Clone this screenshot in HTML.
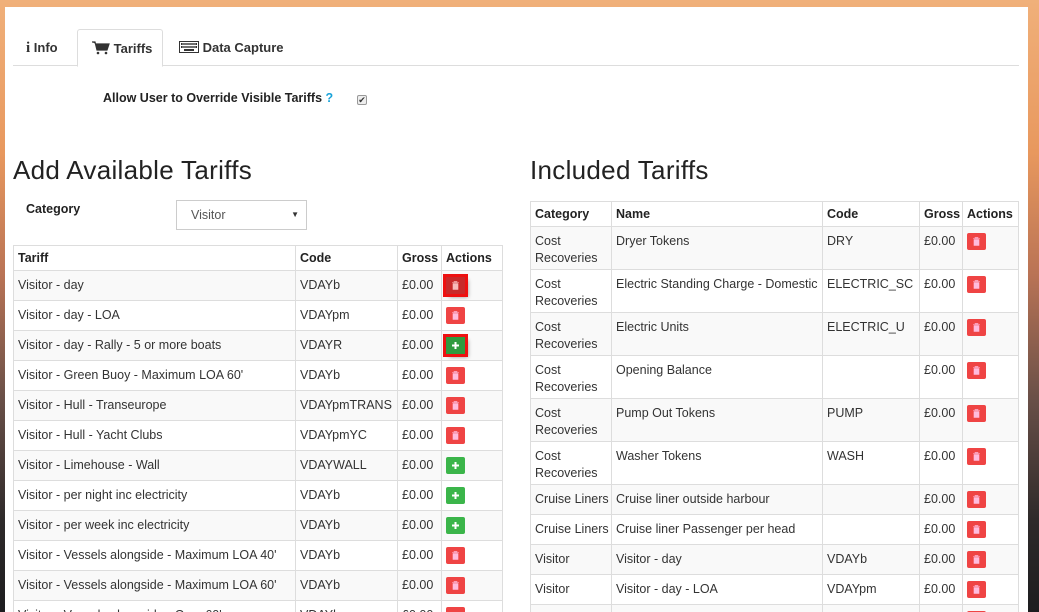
<!DOCTYPE html>
<html><head><meta charset="utf-8"><style>
*{box-sizing:border-box;margin:0;padding:0}
html,body{width:1039px;height:612px;overflow:hidden}
body{position:relative;font-family:"Liberation Sans",sans-serif;color:#333;
background:linear-gradient(180deg,#f0b07a 0%,#e8985e 25%,#b97355 45%,#6a5048 65%,#2e2a2a 85%,#1d1d1f 100%);}
.panel{position:absolute;left:5px;top:7px;width:1023px;height:605px;background:#fff;}
.tabs{position:absolute;left:13px;top:29px;width:1006px;height:37px;border-bottom:1px solid #ddd}
.tab{position:absolute;top:0;height:37px;font-weight:bold;font-size:13px;color:#333;line-height:37px}
.tab.act{border:1px solid #ddd;border-bottom:1px solid #fff;background:#fff;height:38px;border-radius:3px 3px 0 0}
h2{position:absolute;font-weight:normal;font-size:26px;color:#222;letter-spacing:0.3px}
table{position:absolute;border-collapse:collapse;table-layout:fixed;font-size:12.5px}
td,th{border:1px solid #ddd;padding:0 4px;vertical-align:top;text-align:left;overflow:hidden;white-space:nowrap}
th{font-weight:bold;color:#222;height:25px;vertical-align:middle}
tr.s td{background:#f9f9f9}
.l td{height:30px;line-height:28px}
.r td{line-height:17px;padding-top:6px}
.r tr.d td{height:43px}
.r tr.o td{height:30px}
.b{display:inline-block;width:19px;height:17px;vertical-align:middle;position:relative;border-radius:2px}
.b svg{position:absolute;left:5px;top:4px}
.rd{background:#ef4444}
.gr{background:#3bb54a}
.hl{box-shadow:0 0 0 3px #e11,3px 3px 4px rgba(0,0,0,.4);border-radius:0}
</style></head><body>
<div class="panel"></div>
<div class="tabs">
 <div class="tab" style="left:13px"><span style="font-family:'Liberation Serif',serif;font-size:15px">i</span> Info</div>
 <div class="tab act" style="left:64px;width:86px;padding-left:14px"><svg width="18" height="14" viewBox="0 0 18 14" style="vertical-align:-2px"><path d="M0 1h3l2 8h10l2-6H4" fill="#333" stroke="#333" stroke-width="1.2"/><circle cx="6" cy="12" r="1.3" fill="#333"/><circle cx="14" cy="12" r="1.3" fill="#333"/></svg> Tariffs</div>
 <div class="tab" style="left:166px"><svg width="20" height="12" viewBox="0 0 20 12" style="vertical-align:-1px"><rect x="0.5" y="0.5" width="19" height="11" fill="none" stroke="#333"/><path d="M2 2h16v2H2zM2 5h16v2H2zM5 8h10v2H5z" fill="#333"/><path d="M4 2v5M6 2v5M8 2v5M10 2v5M12 2v5M14 2v5M16 2v5" stroke="#fff" stroke-width=".6"/></svg> Data Capture</div>
</div>
<div style="position:absolute;left:103px;top:91px;font-weight:bold;font-size:12.5px;color:#222">Allow User to Override Visible Tariffs <span style="color:#1aa3d9">?</span></div>
<div style="position:absolute;left:357px;top:95px;width:10px;height:10px;border:1px solid #999;border-radius:2px;background:#eee;font-size:9px;line-height:8px;text-align:center">&#10004;</div>

<h2 style="left:13px;top:155px">Add Available Tariffs</h2>
<h2 style="left:530px;top:155px">Included Tariffs</h2>
<div style="position:absolute;left:26px;top:202px;font-weight:bold;font-size:12.5px;color:#222">Category</div>
<div style="position:absolute;left:176px;top:200px;width:131px;height:30px;border:1px solid #ccc;font-size:12.5px;color:#555;line-height:28px;padding-left:14px">Visitor<span style="position:absolute;right:7px;font-size:8px;color:#333">&#9660;</span></div>

<table class="l" style="left:13px;top:245px;width:489px">
<colgroup><col style="width:282px"><col style="width:102px"><col style="width:44px"><col style="width:61px"></colgroup>
<tr><th>Tariff</th><th>Code</th><th>Gross</th><th>Actions</th></tr>
<tr class="s"><td>Visitor - day</td><td>VDAYb</td><td>£0.00</td><td><span class="b rd hl" style="background:#c82a2a"><svg width="9" height="9"><path d="M1 1.5h7M3 1.5V.5h3v1M2 2.5h5v6H2z" fill="#f7bcbc" stroke="#f7bcbc" stroke-width=".6"/></svg></span></td></tr>
<tr><td>Visitor - day - LOA</td><td>VDAYpm</td><td>£0.00</td><td><span class="b rd"><svg width="9" height="9"><path d="M1 1.5h7M3 1.5V.5h3v1M2 2.5h5v6H2z" fill="#fbd" stroke="#fbd" stroke-width=".6"/></svg></span></td></tr>
<tr class="s"><td>Visitor - day - Rally - 5 or more boats</td><td>VDAYR</td><td>£0.00</td><td><span class="b gr hl" style="background:#2f9a3e"><svg width="9" height="9"><path d="M4.5 1v7M1 4.5h7" stroke="#fff" stroke-width="2"/></svg></span></td></tr>
<tr><td>Visitor - Green Buoy - Maximum LOA 60'</td><td>VDAYb</td><td>£0.00</td><td><span class="b rd"><svg width="9" height="9"><path d="M1 1.5h7M3 1.5V.5h3v1M2 2.5h5v6H2z" fill="#fbd" stroke="#fbd" stroke-width=".6"/></svg></span></td></tr>
<tr class="s"><td>Visitor - Hull - Transeurope</td><td>VDAYpmTRANS</td><td>£0.00</td><td><span class="b rd"><svg width="9" height="9"><path d="M1 1.5h7M3 1.5V.5h3v1M2 2.5h5v6H2z" fill="#fbd" stroke="#fbd" stroke-width=".6"/></svg></span></td></tr>
<tr><td>Visitor - Hull - Yacht Clubs</td><td>VDAYpmYC</td><td>£0.00</td><td><span class="b rd"><svg width="9" height="9"><path d="M1 1.5h7M3 1.5V.5h3v1M2 2.5h5v6H2z" fill="#fbd" stroke="#fbd" stroke-width=".6"/></svg></span></td></tr>
<tr class="s"><td>Visitor - Limehouse - Wall</td><td>VDAYWALL</td><td>£0.00</td><td><span class="b gr"><svg width="9" height="9"><path d="M4.5 1v7M1 4.5h7" stroke="#fff" stroke-width="2"/></svg></span></td></tr>
<tr><td>Visitor - per night inc electricity</td><td>VDAYb</td><td>£0.00</td><td><span class="b gr"><svg width="9" height="9"><path d="M4.5 1v7M1 4.5h7" stroke="#fff" stroke-width="2"/></svg></span></td></tr>
<tr class="s"><td>Visitor - per week inc electricity</td><td>VDAYb</td><td>£0.00</td><td><span class="b gr"><svg width="9" height="9"><path d="M4.5 1v7M1 4.5h7" stroke="#fff" stroke-width="2"/></svg></span></td></tr>
<tr><td>Visitor - Vessels alongside - Maximum LOA 40'</td><td>VDAYb</td><td>£0.00</td><td><span class="b rd"><svg width="9" height="9"><path d="M1 1.5h7M3 1.5V.5h3v1M2 2.5h5v6H2z" fill="#fbd" stroke="#fbd" stroke-width=".6"/></svg></span></td></tr>
<tr class="s"><td>Visitor - Vessels alongside - Maximum LOA 60'</td><td>VDAYb</td><td>£0.00</td><td><span class="b rd"><svg width="9" height="9"><path d="M1 1.5h7M3 1.5V.5h3v1M2 2.5h5v6H2z" fill="#fbd" stroke="#fbd" stroke-width=".6"/></svg></span></td></tr>
<tr><td>Visitor - Vessels alongside - Over 60'</td><td>VDAYb</td><td>£0.00</td><td><span class="b rd"></span></td></tr>
</table>

<table class="r" style="left:530px;top:201px;width:488px">
<colgroup><col style="width:81px"><col style="width:211px"><col style="width:97px"><col style="width:43px"><col style="width:56px"></colgroup>
<tr><th>Category</th><th>Name</th><th>Code</th><th>Gross</th><th>Actions</th></tr>
<tr class="d s"><td>Cost<br>Recoveries</td><td>Dryer Tokens</td><td>DRY</td><td>£0.00</td><td><span class="b rd"><svg width="9" height="9"><path d="M1 1.5h7M3 1.5V.5h3v1M2 2.5h5v6H2z" fill="#fbd" stroke="#fbd" stroke-width=".6"/></svg></span></td></tr>
<tr class="d"><td>Cost<br>Recoveries</td><td>Electric Standing Charge - Domestic</td><td>ELECTRIC_SC</td><td>£0.00</td><td><span class="b rd"><svg width="9" height="9"><path d="M1 1.5h7M3 1.5V.5h3v1M2 2.5h5v6H2z" fill="#fbd" stroke="#fbd" stroke-width=".6"/></svg></span></td></tr>
<tr class="d s"><td>Cost<br>Recoveries</td><td>Electric Units</td><td>ELECTRIC_U</td><td>£0.00</td><td><span class="b rd"><svg width="9" height="9"><path d="M1 1.5h7M3 1.5V.5h3v1M2 2.5h5v6H2z" fill="#fbd" stroke="#fbd" stroke-width=".6"/></svg></span></td></tr>
<tr class="d"><td>Cost<br>Recoveries</td><td>Opening Balance</td><td></td><td>£0.00</td><td><span class="b rd"><svg width="9" height="9"><path d="M1 1.5h7M3 1.5V.5h3v1M2 2.5h5v6H2z" fill="#fbd" stroke="#fbd" stroke-width=".6"/></svg></span></td></tr>
<tr class="d s"><td>Cost<br>Recoveries</td><td>Pump Out Tokens</td><td>PUMP</td><td>£0.00</td><td><span class="b rd"><svg width="9" height="9"><path d="M1 1.5h7M3 1.5V.5h3v1M2 2.5h5v6H2z" fill="#fbd" stroke="#fbd" stroke-width=".6"/></svg></span></td></tr>
<tr class="d"><td>Cost<br>Recoveries</td><td>Washer Tokens</td><td>WASH</td><td>£0.00</td><td><span class="b rd"><svg width="9" height="9"><path d="M1 1.5h7M3 1.5V.5h3v1M2 2.5h5v6H2z" fill="#fbd" stroke="#fbd" stroke-width=".6"/></svg></span></td></tr>
<tr class="o s"><td>Cruise Liners</td><td>Cruise liner outside harbour</td><td></td><td>£0.00</td><td><span class="b rd"><svg width="9" height="9"><path d="M1 1.5h7M3 1.5V.5h3v1M2 2.5h5v6H2z" fill="#fbd" stroke="#fbd" stroke-width=".6"/></svg></span></td></tr>
<tr class="o"><td>Cruise Liners</td><td>Cruise liner Passenger per head</td><td></td><td>£0.00</td><td><span class="b rd"><svg width="9" height="9"><path d="M1 1.5h7M3 1.5V.5h3v1M2 2.5h5v6H2z" fill="#fbd" stroke="#fbd" stroke-width=".6"/></svg></span></td></tr>
<tr class="o s"><td>Visitor</td><td>Visitor - day</td><td>VDAYb</td><td>£0.00</td><td><span class="b rd"><svg width="9" height="9"><path d="M1 1.5h7M3 1.5V.5h3v1M2 2.5h5v6H2z" fill="#fbd" stroke="#fbd" stroke-width=".6"/></svg></span></td></tr>
<tr class="o"><td>Visitor</td><td>Visitor - day - LOA</td><td>VDAYpm</td><td>£0.00</td><td><span class="b rd"><svg width="9" height="9"><path d="M1 1.5h7M3 1.5V.5h3v1M2 2.5h5v6H2z" fill="#fbd" stroke="#fbd" stroke-width=".6"/></svg></span></td></tr>
<tr class="o s"><td></td><td></td><td></td><td></td><td><span class="b rd"></span></td></tr>
</table>
</body></html>
